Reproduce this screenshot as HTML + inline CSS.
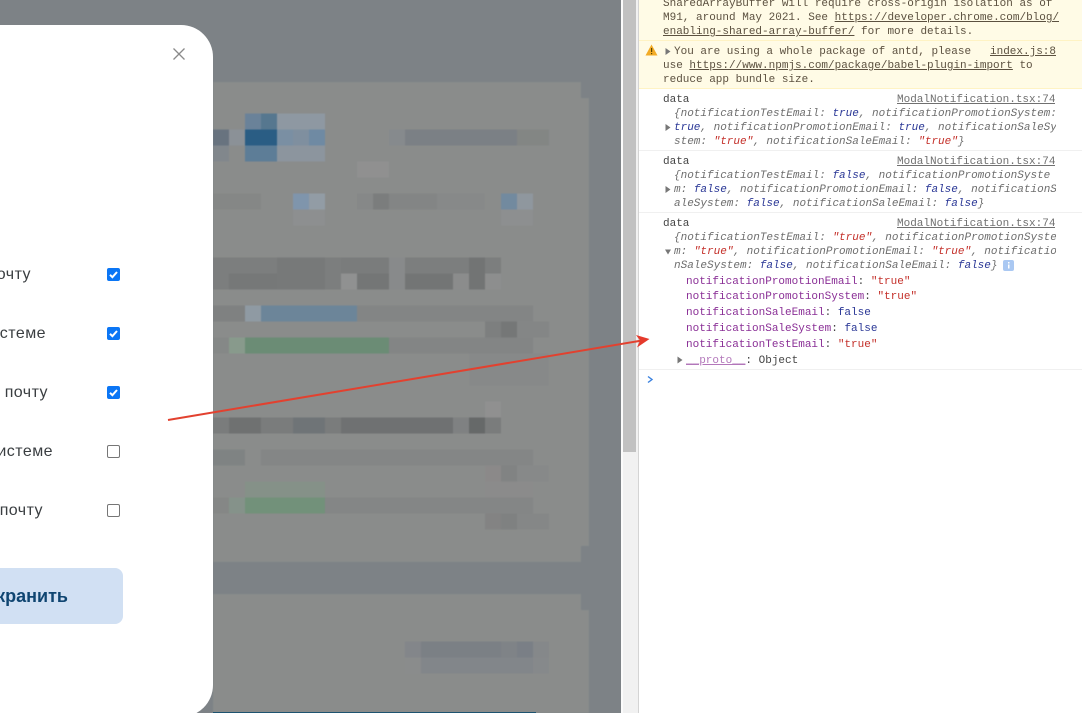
<!DOCTYPE html>
<html><head><meta charset="utf-8"><style>
html,body{margin:0;padding:0;width:1082px;height:713px;overflow:hidden;background:#fff}
#v{position:absolute;left:0;top:0}
.m{position:absolute;left:0;top:0;width:1082px;height:713px;overflow:hidden}
.l{position:absolute;margin-top:1px;height:14px;font:11px/14px "Liberation Mono",monospace;white-space:pre;color:#444;overflow:hidden;filter:blur(.25px)}
.w{color:#5c5140}
.i{font-style:italic;color:#6e6e6e}
.b{color:#2a3796}.r{color:#c4302a}
u{text-underline-offset:1px}
.s{color:#707070;text-decoration:underline;text-underline-offset:1px}
.p{color:#8a2f96}
.t{position:absolute;font:16px/20px "Liberation Sans",sans-serif;letter-spacing:.45px;color:#3a3e41;white-space:pre;text-align:right;width:120px}
.c{position:absolute;left:107px;width:13px;height:13px;border-radius:2px;background:#0b76f5;box-sizing:border-box}
.c.o{background:#fff;border:1px solid #767676}
.c svg{position:absolute;left:0;top:0}
</style></head><body>
<svg id="v" width="1082" height="713" viewBox="0 0 1082 713" shape-rendering="crispEdges">
<rect width="621" height="713" fill="#7d8286"/>
<g style="filter:blur(.6px)">
<rect x="213" y="82" width="368" height="16" fill="#8a8c8b"/>
<rect x="213" y="98" width="376" height="448" fill="#8a8c8b"/>
<rect x="213" y="546" width="368" height="16" fill="#8a8c8b"/>
<rect x="213" y="594" width="368" height="16" fill="#8a8c8b"/>
<rect x="213" y="610" width="376" height="103" fill="#8a8c8b"/>
<rect x="245" y="113.5" width="16" height="16" fill="#6a8299"/><rect x="261" y="113.5" width="16" height="16" fill="#56778f"/><rect x="277" y="113.5" width="48" height="16" fill="#8e98a2"/>
<rect x="213" y="129.5" width="16" height="16" fill="#68737f"/><rect x="229" y="129.5" width="16" height="16" fill="#8b9197"/><rect x="245" y="129.5" width="32" height="16" fill="#2a5d84"/><rect x="277" y="129.5" width="16" height="16" fill="#7a8fa3"/><rect x="293" y="129.5" width="16" height="16" fill="#7f8f9f"/><rect x="309" y="129.5" width="16" height="16" fill="#6f8aa3"/>
<rect x="389" y="129.5" width="16" height="16" fill="#868a8d"/><rect x="405" y="129.5" width="112" height="16" fill="#7b8085"/><rect x="517" y="129.5" width="32" height="16" fill="#838684"/>
<rect x="213" y="145.5" width="16" height="16" fill="#81878c"/><rect x="245" y="145.5" width="32" height="16" fill="#5d7d97"/><rect x="277" y="145.5" width="48" height="16" fill="#8c959e"/>
<rect x="357" y="161.5" width="32" height="16" fill="#909090"/>
<rect x="213" y="193.5" width="48" height="16" fill="#858786"/><rect x="293" y="193.5" width="16" height="16" fill="#7f95ac"/><rect x="309" y="193.5" width="16" height="16" fill="#929ca5"/>
<rect x="357" y="193.5" width="16" height="16" fill="#868888"/><rect x="373" y="193.5" width="16" height="16" fill="#7b7d7d"/><rect x="389" y="193.5" width="48" height="16" fill="#838585"/><rect x="437" y="193.5" width="48" height="16" fill="#878989"/>
<rect x="501" y="193.5" width="16" height="16" fill="#728a9f"/><rect x="517" y="193.5" width="16" height="16" fill="#8f979e"/>
<rect x="293" y="209.5" width="32" height="16" fill="#8d8f90"/><rect x="501" y="209.5" width="32" height="16" fill="#8d8f90"/>
<rect x="213" y="257.5" width="288" height="32" fill="#7c7e7e"/><rect x="229" y="273.5" width="48" height="16" fill="#767878"/><rect x="277" y="257.5" width="48" height="32" fill="#777979"/><rect x="341" y="257.500" width="48" height="16" fill="#7a7c7c"/><rect x="341" y="273.5" width="16" height="16" fill="#909191"/><rect x="357" y="273.5" width="32" height="16" fill="#747676"/><rect x="389" y="257.5" width="16" height="32" fill="#888a8b"/><rect x="405" y="273.5" width="48" height="16" fill="#737575"/><rect x="453" y="273.5" width="16" height="16" fill="#8b8c8c"/><rect x="469" y="257.5" width="16" height="32" fill="#727474"/><rect x="485" y="273.5" width="16" height="16" fill="#8d8e8e"/>
<rect x="213" y="305.5" width="32" height="16" fill="#7f8181"/><rect x="245" y="305.5" width="16" height="16" fill="#8f9aa3"/><rect x="261" y="305.5" width="96" height="16" fill="#6c8599"/><rect x="357" y="305.5" width="176" height="16" fill="#838585"/>
<rect x="485" y="321.5" width="16" height="16" fill="#7d7f7f"/><rect x="501" y="321.5" width="16" height="16" fill="#757777"/><rect x="517" y="321.5" width="32" height="16" fill="#848686"/>
<rect x="213" y="337.5" width="16" height="16" fill="#858887"/><rect x="229" y="337.5" width="16" height="16" fill="#889a8c"/><rect x="245" y="337.5" width="144" height="16" fill="#6b8c75"/><rect x="389" y="337.5" width="144" height="16" fill="#838585"/>
<rect x="469" y="353.5" width="80" height="32" fill="#878989"/>
<rect x="485" y="401.5" width="16" height="16" fill="#909090"/>
<rect x="213" y="417.5" width="288" height="16" fill="#7a7c7c"/><rect x="229" y="417.5" width="32" height="16" fill="#6f7171"/><rect x="293" y="417.5" width="32" height="16" fill="#6f7477"/><rect x="341" y="417.5" width="144" height="16" fill="#6f7172"/><rect x="453" y="417.5" width="16" height="16" fill="#7f8182"/><rect x="469" y="417.5" width="16" height="16" fill="#666969"/>
<rect x="213" y="449.5" width="32" height="16" fill="#7f8383"/><rect x="261" y="449.5" width="272" height="16" fill="#848686"/>
<rect x="485" y="465.5" width="16" height="16" fill="#8b8989"/><rect x="501" y="465.5" width="16" height="16" fill="#818383"/><rect x="517" y="465.5" width="32" height="16" fill="#878989"/>
<rect x="245" y="481.5" width="80" height="16" fill="#859188"/><rect x="485" y="481.5" width="48" height="16" fill="#8b8b8b"/>
<rect x="213" y="497.5" width="16" height="16" fill="#858786"/><rect x="229" y="497.5" width="16" height="16" fill="#85928a"/><rect x="245" y="497.5" width="80" height="16" fill="#72917a"/><rect x="325" y="497.5" width="208" height="16" fill="#848686"/>
<rect x="485" y="513.5" width="16" height="16" fill="#838383"/><rect x="501" y="513.5" width="16" height="16" fill="#7f8181"/><rect x="517" y="513.5" width="32" height="16" fill="#858787"/>
<rect x="405" y="641.5" width="16" height="16" fill="#83868a"/><rect x="421" y="641.5" width="80" height="16" fill="#7b8085"/><rect x="501" y="641.5" width="16" height="16" fill="#7f8387"/><rect x="517" y="641.5" width="16" height="16" fill="#7a7f86"/><rect x="533" y="641.5" width="16" height="16" fill="#85888a"/>
<rect x="421" y="657.5" width="112" height="16" fill="#82868a"/><rect x="405" y="657.5" width="16" height="16" fill="#8a8c8c"/><rect x="533" y="657.5" width="16" height="16" fill="#86898b"/>
</g>
<rect x="213" y="712" width="323" height="1" fill="#1d5370"/>
<rect x="621" width="18" height="713" fill="#f1f1f1"/><rect x="621" width="2" height="713" fill="#fbfbfb"/>
<rect x="623" width="13" height="452" fill="#c1c1c1"/><rect x="638" width="1" height="713" fill="#d4d4d4"/>
<rect x="639" width="443" height="88" fill="#fffbe6"/>
<rect x="639" y="40" width="443" height="1" fill="#fff3c4"/><rect x="639" y="88" width="443" height="1" fill="#fff3c4"/>
<rect x="639" y="150" width="443" height="1" fill="#f0f0f0"/><rect x="639" y="212" width="443" height="1" fill="#f0f0f0"/><rect x="639" y="369" width="443" height="1" fill="#f0f0f0"/>
<g shape-rendering="auto">
<path d="M651.500 44.500L657.500 55.500H645.500Z" fill="#f2ab26"/><rect x="651" y="48" width="1.200" height="4" fill="#5b4300"/><rect x="651" y="53" width="1.200" height="1.200" fill="#5b4300"/>
<path d="M665.500 48V55L670.500 51.500Z" fill="#777"/>
<path d="M665.500 124V131L670.500 127.500Z" fill="#777"/>
<path d="M665.500 186V193L670.500 189.500Z" fill="#777"/>
<path d="M665 249.500H671L668 254.500Z" fill="#777"/>
<path d="M677.500 356.500V363.500L682.500 360Z" fill="#777"/>
<path d="M648 376.500L652 379.500L648 382.500" fill="none" stroke="#3b82e0" stroke-width="1.400"/>
<rect x="1003" y="260" width="11" height="11" rx="2" fill="#aac8f2"/><rect x="1008" y="262" width="1.500" height="1.500" fill="#fff"/><rect x="1008" y="264.500" width="1.500" height="4" fill="#fff"/>
</g>
</svg>
<div class="m" style="pointer-events:none">
<div style="position:absolute;left:-40px;top:25px;width:253px;height:692px;background:#fff;border-radius:32px"></div>
<svg style="position:absolute;left:170px;top:45px" width="18" height="18"><path d="M3.500 3.500L14.500 14.500M14.500 3.500L3.500 14.500" stroke="#8a8a8a" stroke-width="1.300" fill="none"/></svg>
<div class="t" style="left:-89px;top:265px">почту</div>
<div class="t" style="left:-74px;top:324px">стеме</div>
<div class="t" style="left:-72px;top:383px">почту</div>
<div class="t" style="left:-67px;top:442px">истеме</div>
<div class="t" style="left:-77px;top:501px">почту</div>
<div class="c" style="top:268px"><svg width="13" height="13"><path d="M3 6.800L5.400 9.200L10 4" fill="none" stroke="#fff" stroke-width="2"/></svg></div>
<div class="c" style="top:327px"><svg width="13" height="13"><path d="M3 6.800L5.400 9.200L10 4" fill="none" stroke="#fff" stroke-width="2"/></svg></div>
<div class="c" style="top:386px"><svg width="13" height="13"><path d="M3 6.800L5.400 9.200L10 4" fill="none" stroke="#fff" stroke-width="2"/></svg></div>
<div class="c o" style="top:445px"></div>
<div class="c o" style="top:504px"></div>
<div style="position:absolute;left:-20px;top:568px;width:143px;height:56px;background:#d1e0f3;border-radius:8px"></div>
<div style="position:absolute;left:-52px;width:120px;top:585px;text-align:right;font:bold 18px/22px 'Liberation Sans',sans-serif;color:#0f4571">кранить</div>

<div class="l w" style="left:663px;top:-4px">SharedArrayBuffer will require cross-origin isolation as of</div>
<div class="l w" style="left:663px;top:10px">M91, around May 2021. See <u>https://developer.chrome.com/blog/</u></div>
<div class="l w" style="left:663px;top:24px"><u>enabling-shared-array-buffer/</u> for more details.</div>
<div class="l w" style="left:674px;top:44px">You are using a whole package of antd, please</div>
<div class="l w" style="left:990px;top:44px"><u>index.js:8</u></div>
<div class="l w" style="left:663px;top:58px">use <u>https://www.npmjs.com/package/babel-plugin-import</u> to</div>
<div class="l w" style="left:663px;top:72px">reduce app bundle size.</div>

<div class="l" style="left:663px;top:92px">data</div>
<div class="l s" style="left:897px;top:92px">ModalNotification.tsx:74</div>
<div class="l i" style="left:674px;top:106px;width:382px">{notificationTestEmail: <span class="b">true</span>, notificationPromotionSystem:</div>
<div class="l i" style="left:674px;top:120px;width:382px"><span class="b">true</span>, notificationPromotionEmail: <span class="b">true</span>, notificationSaleSy</div>
<div class="l i" style="left:674px;top:134px;width:382px">stem: <span class="r">"true"</span>, notificationSaleEmail: <span class="r">"true"</span>}</div>

<div class="l" style="left:663px;top:154px">data</div>
<div class="l s" style="left:897px;top:154px">ModalNotification.tsx:74</div>
<div class="l i" style="left:674px;top:168px;width:382px">{notificationTestEmail: <span class="b">false</span>, notificationPromotionSyste</div>
<div class="l i" style="left:674px;top:182px;width:382px">m: <span class="b">false</span>, notificationPromotionEmail: <span class="b">false</span>, notificationS</div>
<div class="l i" style="left:674px;top:196px;width:382px">aleSystem: <span class="b">false</span>, notificationSaleEmail: <span class="b">false</span>}</div>

<div class="l" style="left:663px;top:216px">data</div>
<div class="l s" style="left:897px;top:216px">ModalNotification.tsx:74</div>
<div class="l i" style="left:674px;top:230px;width:382px">{notificationTestEmail: <span class="r">"true"</span>, notificationPromotionSyste</div>
<div class="l i" style="left:674px;top:244px;width:382px">m: <span class="r">"true"</span>, notificationPromotionEmail: <span class="r">"true"</span>, notificatio</div>
<div class="l i" style="left:674px;top:258px;width:330px">nSaleSystem: <span class="b">false</span>, notificationSaleEmail: <span class="b">false</span>}</div>

<div class="l" style="left:686px;top:274px"><span class="p">notificationPromotionEmail</span>: <span class="r">"true"</span></div>
<div class="l" style="left:686px;top:289px"><span class="p">notificationPromotionSystem</span>: <span class="r">"true"</span></div>
<div class="l" style="left:686px;top:305px"><span class="p">notificationSaleEmail</span>: <span class="b">false</span></div>
<div class="l" style="left:686px;top:321px"><span class="p">notificationSaleSystem</span>: <span class="b">false</span></div>
<div class="l" style="left:686px;top:337px"><span class="p">notificationTestEmail</span>: <span class="r">"true"</span></div>
<div class="l" style="left:686px;top:353px"><span class="p" style="opacity:.65;text-decoration:underline">__proto__</span>: Object</div>

<svg style="position:absolute;left:0;top:0" width="1082" height="713"><path d="M168 420L642 340.500" stroke="#e2412f" stroke-width="2" fill="none"/><path d="M649.500 339L636 335L640 340.500L637 347.500Z" fill="#e53a2c"/></svg>
</div>
</body></html>
